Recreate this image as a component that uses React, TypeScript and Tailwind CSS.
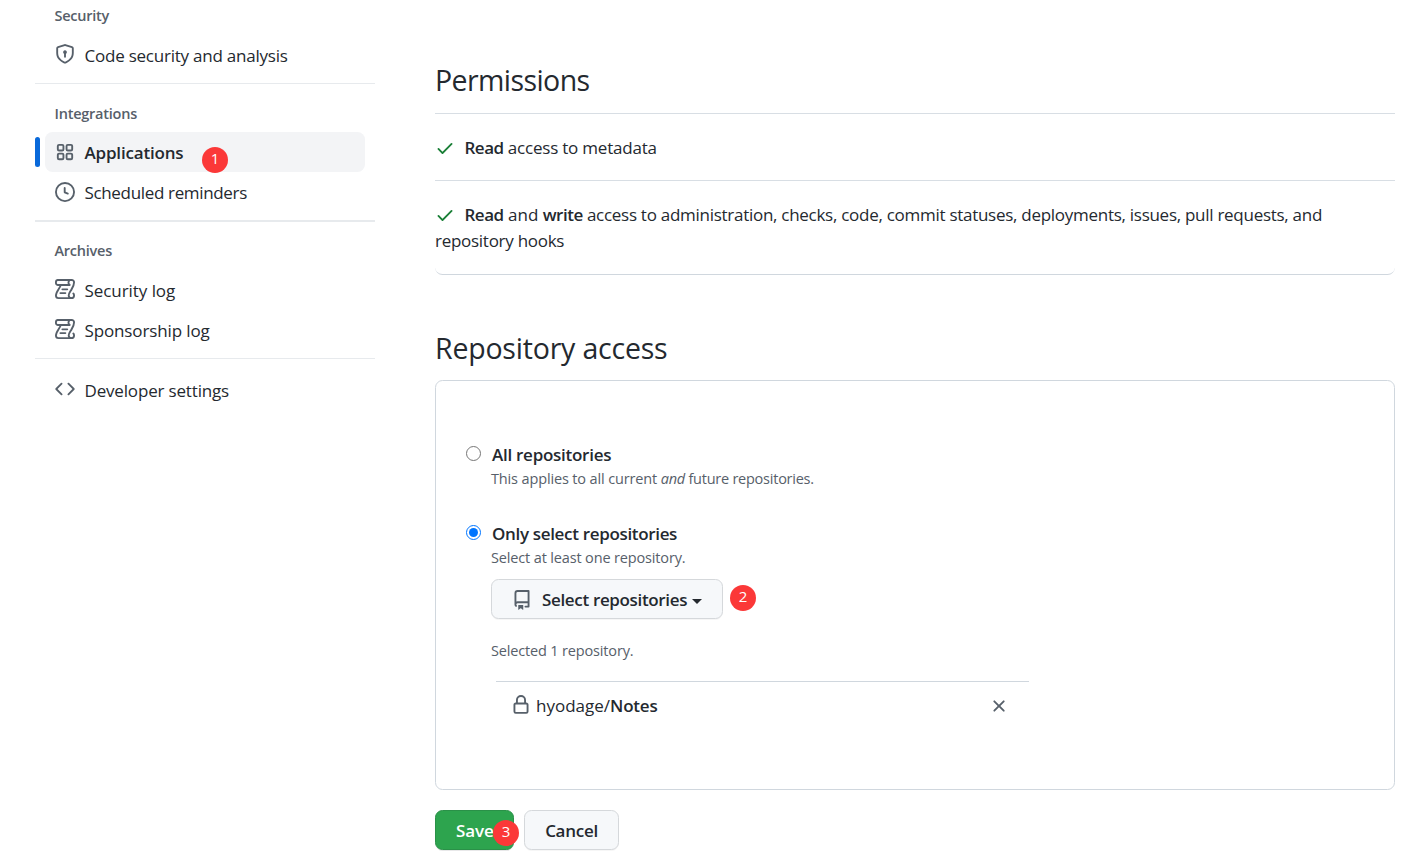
import type { ReactNode } from "react";

const icons = {
  shield:
    "m8.533.133 5.25 1.68A1.75 1.75 0 0 1 15 3.48V7c0 1.566-.32 3.182-1.303 4.682-.983 1.498-2.585 2.813-5.032 3.855a1.697 1.697 0 0 1-1.33 0c-2.447-1.042-4.049-2.357-5.032-3.855C1.32 10.182 1 8.566 1 7V3.48a1.755 1.755 0 0 1 1.217-1.667l5.25-1.68a1.748 1.748 0 0 1 1.066 0Zm-.61 1.429.001.001-5.25 1.68a.251.251 0 0 0-.174.237V7c0 1.36.275 2.666 1.057 3.859.784 1.194 2.121 2.342 4.366 3.298a.196.196 0 0 0 .154 0c2.245-.957 3.582-2.103 4.366-3.297C13.225 9.666 13.5 8.358 13.5 7V3.48a.25.25 0 0 0-.174-.238l-5.25-1.68a.25.25 0 0 0-.153 0ZM9.5 6.5c0 .536-.286 1.032-.75 1.3v2.45a.75.75 0 0 1-1.5 0V7.8A1.5 1.5 0 1 1 9.5 6.5Z",
  clock:
    "M8 0a8 8 0 1 1 0 16A8 8 0 0 1 8 0ZM1.5 8a6.5 6.5 0 1 0 13 0 6.5 6.5 0 0 0-13 0Zm7-3.25v2.992l2.028.812a.75.75 0 0 1-.557 1.392l-2.5-1A.751.751 0 0 1 7 8.25v-3.5a.75.75 0 0 1 1.5 0Z",
  code:
    "m11.28 3.22 4.25 4.25a.75.75 0 0 1 0 1.06l-4.25 4.25a.749.749 0 0 1-1.275-.326.749.749 0 0 1 .215-.734L13.94 8l-3.72-3.72a.749.749 0 0 1 .326-1.275.749.749 0 0 1 .734.215Zm-6.56 0a.751.751 0 0 1 1.042.018.751.751 0 0 1 .018 1.042L2.06 8l3.72 3.72a.749.749 0 0 1-.326 1.275.749.749 0 0 1-.734-.215L.47 8.53a.75.75 0 0 1 0-1.06Z",
  check:
    "M13.78 4.22a.75.75 0 0 1 0 1.06l-7.25 7.25a.75.75 0 0 1-1.06 0L2.22 9.28a.751.751 0 0 1 .018-1.042.751.751 0 0 1 1.042-.018L6 10.94l6.72-6.72a.75.75 0 0 1 1.06 0Z",
  repo:
    "M2 2.5A2.5 2.5 0 0 1 4.5 0h8.75a.75.75 0 0 1 .75.75v12.5a.75.75 0 0 1-.75.75h-2.5a.75.75 0 0 1 0-1.5h1.75v-2h-8a1 1 0 0 0-.714 1.7.75.75 0 1 1-1.072 1.05A2.495 2.495 0 0 1 2 11.5Zm10.5-1h-8a1 1 0 0 0-1 1v6.708A2.486 2.486 0 0 1 4.5 9h8ZM5 12.25a.25.25 0 0 1 .25-.25h3.5a.25.25 0 0 1 .25.25v3.25a.25.25 0 0 1-.4.2l-1.45-1.087a.249.249 0 0 0-.3 0L5.4 15.7a.25.25 0 0 1-.4-.2Z",
  lock:
    "M4 4a4 4 0 0 1 8 0v2h.25c.966 0 1.75.784 1.75 1.75v5.5A1.75 1.75 0 0 1 12.25 15h-8.5A1.75 1.75 0 0 1 2 13.25v-5.5C2 6.784 2.784 6 3.75 6H4Zm8.25 3.5h-8.5a.25.25 0 0 0-.25.25v5.5c0 .138.112.25.25.25h8.5a.25.25 0 0 0 .25-.25v-5.5a.25.25 0 0 0-.25-.25ZM10.5 6V4a2.5 2.5 0 1 0-5 0v2Z",
  x: "M3.72 3.72a.75.75 0 0 1 1.06 0L8 6.94l3.22-3.22a.749.749 0 0 1 1.275.326.749.749 0 0 1-.215.734L9.06 8l3.22 3.22a.749.749 0 0 1-.326 1.275.749.749 0 0 1-.734-.215L8 9.06l-3.22 3.22a.751.751 0 0 1-1.042-.018.751.751 0 0 1-.018-1.042L6.94 8 3.72 4.78a.75.75 0 0 1 0-1.06Z",
};

type IconName = keyof typeof icons | "log";

function Icon({ name, className = "" }: { name: IconName; className?: string }) {
  if (name === "log") {
    return (
      <svg
        viewBox="0 0 16 16"
        className={`size-5 shrink-0 overflow-visible ${className}`}
        fill="none"
        stroke="currentColor"
        strokeWidth="1.5"
        strokeLinecap="round"
        strokeLinejoin="round"
      >
        <path d="M2.4 .75H13.4a1.85 1.85 0 0 1 1.85 1.85c0 3.2-1.6 5-2.7 6.8-.8 1.3-1.6 2.5-1.6 3.7a2.15 2.15 0 1 0 4.3 0c0-.7-.2-1.2-.6-1.5" />
        <path d="M11.75 4.75H2.4A1.65 1.65 0 0 1 .75 3.1v-.7A1.65 1.65 0 0 1 2.4 .75M11.75 4.75c-.7-.4-1-1.1-1-1.8 0-.8.3-1.5.9-2M4.6 5C3.8 7.4.75 10.2.75 13.2A2.05 2.05 0 0 0 2.8 15.25H13M5.9 8.25h3.9M4.3 11.25h4" />
      </svg>
    );
  }
  return (
    <svg viewBox="0 0 16 16" className={`size-5 shrink-0 overflow-visible ${className}`} fill="currentColor">
      <path d={icons[name]} />
    </svg>
  );
}

function AppsIcon() {
  return (
    <svg viewBox="0 0 16 16" className="size-5 shrink-0 text-[#57606a]" fill="none" stroke="currentColor" strokeWidth="1.5">
      <rect x="2.25" y="2.25" width="4.5" height="4.5" rx="1" />
      <rect x="9.25" y="2.25" width="4.5" height="4.5" rx="1" />
      <rect x="2.25" y="9.25" width="4.5" height="4.5" rx="1" />
      <rect x="9.25" y="9.25" width="4.5" height="4.5" rx="1" />
    </svg>
  );
}

function Badge({ n, className }: { n: number; className: string }) {
  return (
    <span
      className={`absolute flex size-[26px] items-center justify-center rounded-full bg-[#fb3838] text-[15px] leading-none font-normal tracking-normal text-white ${className}`}
    >
      {n}
    </span>
  );
}

function NavHeading({ className, children }: { className: string; children: ReactNode }) {
  return (
    <h3 className={`flex h-9 items-center pl-[19.5px] text-[14.5px] font-semibold text-[#57606a] ${className}`}>{children}</h3>
  );
}

function NavItem({
  icon,
  className,
  iconClass = "-mt-0.5",
  children,
}: {
  icon: IconName;
  className: string;
  iconClass?: string;
  children: ReactNode;
}) {
  return (
    <a className={`mx-2.5 flex h-10 items-center gap-[9.5px] pl-2.5 ${className}`}>
      <Icon name={icon} className={`text-[#57606a] ${iconClass}`} />
      <span className="pt-0.5">{children}</span>
    </a>
  );
}

function Sidebar() {
  return (
    <nav className="w-[340px] shrink-0">
      <NavHeading className="-mt-0.5 tracking-[-0.25px]">Security</NavHeading>
      <NavItem icon="shield" className="mt-px tracking-[-0.23px]">Code security and analysis</NavItem>
      <div className="mt-2 h-px bg-[#e7eaed]" />
      <NavHeading className="mt-3 tracking-[-0.24px]">Integrations</NavHeading>
      <div className="relative flex">
        <span className="mt-[5px] h-[30px] w-[5px] rounded-md bg-[#0969da]" />
        <a className="ml-[5px] flex h-10 w-80 items-center gap-[9.5px] rounded-[7.5px] bg-[#f3f4f6] pl-2.5 font-semibold tracking-[-0.18px]">
          <AppsIcon />
          <span className="pt-0.5">Applications</span>
        </a>
        <Badge n={1} className="top-[15px] left-[167px] pb-[3px]" />
      </div>
      <NavItem icon="clock" className="tracking-[-0.34px]" iconClass="-mt-px">Scheduled reminders</NavItem>
      <div className="mt-2 h-0.5 bg-[#e7eaed]" />
      <NavHeading className="mt-[11px] mb-px tracking-[-0.25px]">Archives</NavHeading>
      <NavItem icon="log" className="tracking-[-0.06px]">Security log</NavItem>
      <NavItem icon="log" className="tracking-[-0.13px]">Sponsorship log</NavItem>
      <div className="mt-2 h-px bg-[#e7eaed]" />
      <NavItem icon="code" className="mt-[11px] tracking-[-0.17px]">Developer settings</NavItem>
    </nav>
  );
}

function Radio({ checked }: { checked?: boolean }) {
  return (
    <span
      className={`mt-[2px] flex size-[15px] shrink-0 items-center justify-center rounded-full border ${
        checked ? "border-[#0075ff]" : "border-[#767676]"
      }`}
    >
      {checked && <span className="size-[9px] rounded-full bg-[#0075ff]" />}
    </span>
  );
}

function Main() {
  return (
    <main className="w-[960px]">
      <h2 className="mt-[58px] h-[55px] text-[28.5px] leading-[44px] tracking-[-0.58px]">Permissions</h2>
      <ul className="rounded-b-[7.5px] border-b border-[#d0d7de]">
        <li className="h-[67px] border-t border-[#d8dee4] pt-[21px] leading-[26px]">
          <Icon name="check" className="mr-[9.5px] inline-block align-[-4px] text-[#1a7f37]" />
          <b className="font-semibold tracking-[-0.5px]">Read</b>
          <span className="tracking-[-0.21px]"> access to metadata</span>
        </li>
        <li className="h-[94px] border-t border-[#d8dee4] pt-[21px] leading-[26px]">
          <Icon name="check" className="mr-[9.5px] inline-block align-[-4px] text-[#1a7f37]" />
          <b className="font-semibold tracking-[-0.5px]">Read</b>
          <span> and </span>
          <b className="font-semibold tracking-[-0.49px]">write</b>
          <span className="tracking-[-0.275px]">
            {" "}
            access to administration, checks, code, commit statuses, deployments, issues, pull requests, and
            <br />
            repository hooks
          </span>
        </li>
      </ul>
      <h2 className="mt-[51px] h-[54px] text-[28.5px] leading-[44px] tracking-[-0.2px]">Repository access</h2>
      <section className="h-[410px] rounded-[7.5px] border border-[#d0d7de] pt-[63px] pl-[30px]">
        <div className="flex gap-[10px]">
          <Radio />
          <div>
            <div className="h-[23px] pl-px leading-[22px] font-semibold tracking-[-0.27px]">All repositories</div>
            <p className="h-[56px] text-[14.5px] leading-[24px] text-[#57606a]">
              <span className="tracking-[-0.14px]">This applies to all current </span>
              <em className="tracking-[-0.25px]">and</em>
              <span className="tracking-[-0.24px]"> future repositories.</span>
            </p>
          </div>
        </div>
        <div className="flex gap-[10px]">
          <Radio checked />
          <div>
            <div className="h-[23px] pl-px leading-[22px] font-semibold tracking-[-0.33px]">Only select repositories</div>
            <p className="text-[14.5px] leading-[24px] tracking-[-0.15px] text-[#57606a]">Select at least one repository.</p>
            <div className="relative mt-[9px] w-[232px]">
              <button className="flex h-10 w-full items-center rounded-[7.5px] border border-[#d5d8db] bg-[#f6f8fa] pl-5 font-semibold tracking-[-0.34px] shadow-[0_1px_0_rgba(27,31,36,0.04)]">
                <Icon name="repo" className="mt-px mr-2.5 text-[#57606a]" />
                <span className="pt-px">Select repositories</span>
                <span className="mt-1 ml-[5px] border-x-5 border-t-5 border-x-transparent border-t-[#24292f]" />
              </button>
              <Badge n={2} className="top-[6px] left-[239px] pb-[3px]" />
            </div>
            <p className="mt-5 h-[42px] text-[14.5px] leading-[24px] tracking-[-0.16px] text-[#57606a]">Selected 1 repository.</p>
            <div className="ml-[5px] flex h-12 w-[533px] items-center border-t border-[#d0d7de] pl-[15px]">
              <Icon name="lock" className="-mt-0.5 mr-[5px] text-[#57606a]" />
              <span>hyodage/</span>
              <b className="font-semibold tracking-[-0.2px]">Notes</b>
              <Icon name="x" className="mr-5 ml-auto text-[#57606a]" />
            </div>
          </div>
        </div>
      </section>
      <div className="mt-5 flex gap-2.5">
        <div className="relative">
          <button className="flex h-10 w-[79px] items-center rounded-[7.5px] border border-[#2a9148] bg-[#2da44e] pt-px pl-5 font-semibold tracking-[-0.1px] text-white shadow-[0_1px_0_rgba(27,31,36,0.1)]">
            Save
          </button>
          <Badge n={3} className="top-[10px] left-[58px] pb-[3px]" />
        </div>
        <button className="flex h-10 w-[95px] items-center justify-center rounded-[7.5px] border border-[#d5d8db] bg-[#f6f8fa] pt-px font-semibold tracking-[-0.28px] shadow-[0_1px_0_rgba(27,31,36,0.04)]">
          Cancel
        </button>
      </div>
    </main>
  );
}

export default function App() {
  return (
    <div className="flex h-[866px] w-[1419px] gap-[60px] overflow-hidden bg-white pl-[35px] font-['Open_Sans','Noto_Sans',sans-serif] text-[17px] text-[#24292f]">
      <Sidebar />
      <Main />
    </div>
  );
}
